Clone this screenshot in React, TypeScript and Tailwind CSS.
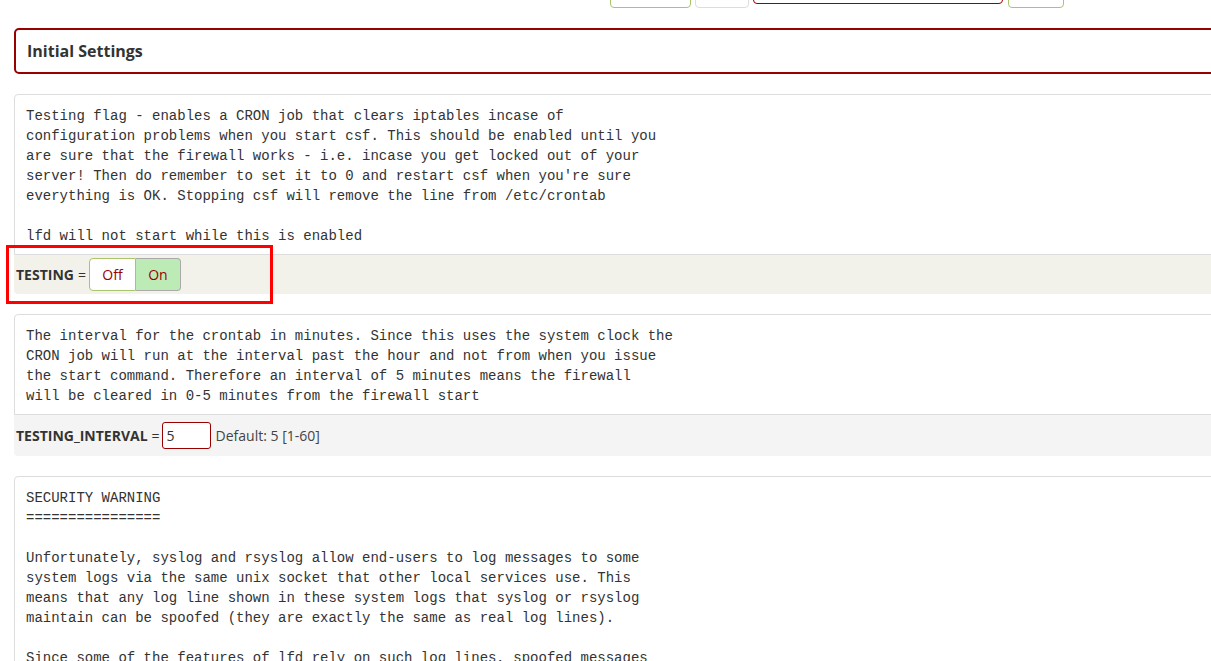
const mono = { fontFamily: '"Liberation Mono", "Courier New", monospace' };

const blocks = [
  {
    text: `Testing flag - enables a CRON job that clears iptables incase of
configuration problems when you start csf. This should be enabled until you
are sure that the firewall works - i.e. incase you get locked out of your
server! Then do remember to set it to 0 and restart csf when you're sure
everything is OK. Stopping csf will remove the line from /etc/crontab

lfd will not start while this is enabled`,
  },
  {
    text: `The interval for the crontab in minutes. Since this uses the system clock the
CRON job will run at the interval past the hour and not from when you issue
the start command. Therefore an interval of 5 minutes means the firewall
will be cleared in 0-5 minutes from the firewall start`,
  },
];

const warning = `SECURITY WARNING
================

Unfortunately, syslog and rsyslog allow end-users to log messages to some
system logs via the same unix socket that other local services use. This
means that any log line shown in these system logs that syslog or rsyslog
maintain can be spoofed (they are exactly the same as real log lines).

Since some of the features of lfd rely on such log lines, spoofed messages`;

function Desc({ text }: { text: string }) {
  return (
    <div className="rounded-t-[4px] border border-[#ddd] bg-white px-[11px] pb-[8px] pt-[11px]">
      <pre className="m-0 text-[14px] leading-[20px] text-[#333]" style={mono}>
        {text}
      </pre>
    </div>
  );
}

export default function App() {
  return (
    <div
      className="relative h-[661px] w-[1211px] overflow-hidden bg-white text-[#333]"
      style={{ fontFamily: '"Open Sans", "Noto Sans", sans-serif' }}
    >
      <div className="w-[1240px] pl-[14px]">
        {/* toolbar, scrolled off the top */}
        <div className="flex h-[8px] items-end overflow-hidden pl-[596px]">
          <div className="h-[30px] w-[81px] rounded-[4px] border border-[#a9c46c]" />
          <div className="ml-[4px] h-[30px] w-[54px] rounded-[4px] border border-[#ddd]" />
          <div className="mb-[4px] ml-[4px] h-[30px] w-[250px] rounded-[4px] border border-[#990000]" />
          <div className="ml-[5px] h-[30px] w-[56px] rounded-[4px] border border-[#a9c46c]" />
        </div>

        <div className="mt-[20px] flex h-[46px] items-center rounded-[5px] border-2 border-[#990000] pl-[11px]">
          <h2 className="text-[16px] font-bold text-[#333]">Initial Settings</h2>
        </div>

        <div className="mt-[20px]">
          <Desc text={blocks[0].text} />
          <div className="flex h-[39px] items-center rounded-b-[4px] bg-[#f3f2ea] pl-[2px] text-[14px]">
            <span className="font-bold">TESTING</span>
            <span className="ml-[4px]">=</span>
            <div className="ml-[3px] flex h-[33px]">
              <button className="w-[47px] rounded-l-[4px] border border-[#a9c46c] bg-white text-[#990000]">
                Off
              </button>
              <button className="w-[45px] rounded-r-[4px] border border-l-0 border-[#aaa] bg-[#bdebb6] text-[#990000]">
                On
              </button>
            </div>
          </div>
        </div>

        <div className="mt-[20px]">
          <Desc text={blocks[1].text} />
          <div className="flex h-[41px] items-center rounded-b-[4px] bg-[#f4f4f4] pl-[2px] text-[14px]">
            <span className="font-bold">TESTING_INTERVAL</span>
            <span className="ml-[4px]">=</span>
            <input
              defaultValue="5"
              className="ml-[2px] h-[27px] w-[49px] rounded-[3px] border border-[#990000] bg-white px-[4px] text-[14px] text-[#333] outline-none"
            />
            <span className="ml-[5px] text-[#444]">Default: 5 [1-60]</span>
          </div>
        </div>

        <div className="mt-[20px]">
          <Desc text={warning} />
        </div>
      </div>

      {/* annotation */}
      <div className="pointer-events-none absolute left-[6px] top-[245px] h-[59px] w-[267px] border-[3px] border-[#ff0000]" />
    </div>
  );
}
